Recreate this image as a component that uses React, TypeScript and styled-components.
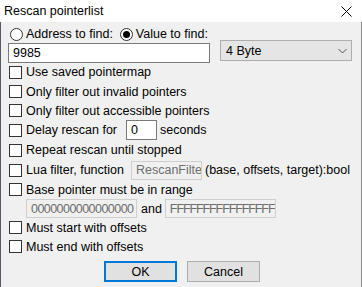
import React from "react";
import styled, { createGlobalStyle } from "styled-components";

const Global = createGlobalStyle`
  html, body { margin: 0; padding: 0; background: #f0f0f0; }
  * { box-sizing: border-box; }
`;

const Window = styled.div`
  width: 362px;
  height: 287px;
  display: flex;
  flex-direction: column;
  font-family: "Liberation Sans", Arial, sans-serif;
  font-size: 12.5px;
  color: #000;
  background: #f0f0f0;
  overflow: hidden;
`;

const TitleBar = styled.div`
  height: 22px;
  flex: none;
  background: #fff;
  display: flex;
  align-items: center;
  justify-content: space-between;
  padding: 0 10px 0 4px;
  font-size: 12.5px;
`;

const Body = styled.div`
  flex: 1;
  display: flex;
  flex-direction: column;
  border-left: 1px solid #5d5566;
  border-right: 1px solid #8a8a8a;
  padding: 4px 0 0 7px;
`;

const Row = styled.div<{ $h: number; $pl?: number }>`
  height: ${(p) => p.$h}px;
  flex: none;
  display: flex;
  align-items: center;
  padding-left: ${(p) => p.$pl ?? 0}px;
  white-space: nowrap;
`;

const RadioCircle = styled.span<{ $on?: boolean }>`
  width: 13px;
  height: 13px;
  border: 1px solid #333;
  border-radius: 50%;
  background: #fff;
  display: inline-flex;
  align-items: center;
  justify-content: center;
  margin-right: 3px;
  flex: none;
  &::after {
    content: "";
    width: 7px;
    height: 7px;
    border-radius: 50%;
    background: ${(p) => (p.$on ? "#000" : "transparent")};
  }
`;

const RadioLabel = styled.span<{ $mr?: number }>`
  margin-right: ${(p) => p.$mr ?? 0}px;
`;

const Box = styled.span`
  width: 13px;
  height: 13px;
  border: 1px solid #333;
  background: #fff;
  margin-right: 4px;
  flex: none;
`;

const TextInput = styled.div<{ $w: number; $h: number; $disabled?: boolean; $mt?: number; $ls?: number }>`
  width: ${(p) => p.$w}px;
  height: ${(p) => p.$h}px;
  margin-top: ${(p) => p.$mt ?? 0}px;
  border: 1px solid ${(p) => (p.$disabled ? "#cfcfcf" : "#7a7a7a")};
  background: ${(p) => (p.$disabled ? "#f0f0f0" : "#fff")};
  color: ${(p) => (p.$disabled ? "#6d6d6d" : "#000")};
  padding: 0 0 0 4px;
  display: flex;
  align-items: center;
  overflow: hidden;
  white-space: nowrap;
  flex: none;
  letter-spacing: ${(p) => p.$ls ?? 0}px;
`;

const Select = styled.div`
  width: 132px;
  height: 21px;
  margin-left: 10px;
  margin-top: -3px;
  border: 1px solid #adadad;
  background: #e5e5e5;
  display: flex;
  align-items: center;
  justify-content: space-between;
  padding: 0 4px 0 5px;
`;

const Gap = styled.span<{ $w: number }>`
  display: inline-block;
  width: ${(p) => p.$w}px;
  flex: none;
`;

const Buttons = styled.div`
  display: flex;
  gap: 10px;
  padding-left: 96px;
  margin-top: 5px;
`;

const Button = styled.div<{ $default?: boolean }>`
  width: 73px;
  height: 21px;
  background: #e1e1e1;
  border: ${(p) => (p.$default ? "2px solid #0078d7" : "1px solid #adadad")};
  display: flex;
  align-items: center;
  justify-content: center;
`;

const Check = ({ children, h, input }: { children: React.ReactNode; h: number; input?: React.ReactNode }) => (
  <Row $h={h} $pl={1}>
    <Box />
    {children}
    {input}
  </Row>
);

export default function App() {
  return (
    <Window>
      <Global />
      <TitleBar>
        <span>Rescan pointerlist</span>
        <svg width="11" height="11" viewBox="0 0 11 11">
          <path d="M0.5 0.5 L10.5 10.5 M10.5 0.5 L0.5 10.5" stroke="#000" strokeWidth="1" />
        </svg>
      </TitleBar>
      <Body>
        <Row $h={16} $pl={2}>
          <RadioCircle />
          <RadioLabel $mr={7}>Address to find:</RadioLabel>
          <RadioCircle $on />
          <RadioLabel>Value to find:</RadioLabel>
        </Row>
        <Row $h={20}>
          <TextInput $w={202} $h={20} $mt={2}>9985</TextInput>
          <Select>
            <span>4 Byte</span>
            <svg width="9" height="6" viewBox="0 0 9 6">
              <path d="M0.5 1 L4.5 5 L8.5 1" stroke="#555" strokeWidth="1" fill="none" />
            </svg>
          </Select>
        </Row>
        <Check h={20}>Use saved pointermap</Check>
        <Check h={19}>Only filter out invalid pointers</Check>
        <Check h={19}>Only filter out accessible pointers</Check>
        <Check
          h={20}
          input={
            <>
              <Gap $w={9} />
              <TextInput $w={31} $h={20}>0</TextInput>
              <Gap $w={3} />
              seconds
            </>
          }
        >
          Delay rescan for
        </Check>
        <Check h={20}>Repeat rescan until stopped</Check>
        <Check
          h={20}
          input={
            <>
              <Gap $w={7} />
              <TextInput $w={71} $h={19} $disabled>RescanFilter</TextInput>
              <Gap $w={3} />
              (base, offsets, target):bool
            </>
          }
        >
          Lua filter, function
        </Check>
        <Check h={19}>Base pointer must be in range</Check>
        <Row $h={19} $pl={18}>
          <TextInput $w={111} $h={19} $disabled $ls={-0.55}>0000000000000000</TextInput>
          <Gap $w={4} />
          and
          <Gap $w={3} />
          <TextInput $w={111} $h={19} $disabled $ls={-1.1}>FFFFFFFFFFFFFFFF</TextInput>
        </Row>
        <Check h={19}>Must start with offsets</Check>
        <Check h={19}>Must end with offsets</Check>
        <Buttons>
          <Button $default>OK</Button>
          <Button>Cancel</Button>
        </Buttons>
      </Body>
    </Window>
  );
}
